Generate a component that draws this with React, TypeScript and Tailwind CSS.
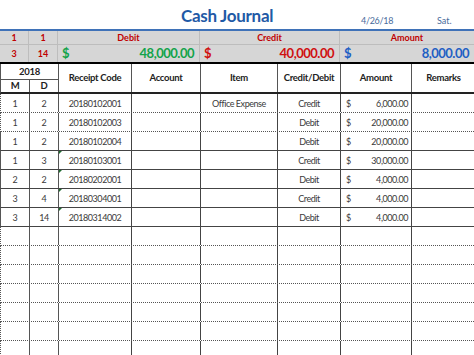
import React from "react";

const COLS = [29, 29, 73, 69, 77, 63, 71, 63];

type Row = {
  m?: string;
  d?: string;
  code?: string;
  item?: string;
  cd?: string;
  amt?: string;
  mark?: boolean;
  solid?: boolean;
};

const rows: Row[] = [
  { m: "1", d: "2", code: "20180102001", item: "Office Expense", cd: "Credit", amt: "6,000.00" },
  { m: "1", d: "2", code: "20180102003", cd: "Debit", amt: "20,000.00" },
  { m: "1", d: "2", code: "20180102004", cd: "Debit", amt: "20,000.00", solid: true },
  { m: "1", d: "3", code: "20180103001", cd: "Credit", amt: "30,000.00", mark: true, solid: true },
  { m: "2", d: "2", code: "20180202001", cd: "Debit", amt: "4,000.00", mark: true, solid: true },
  { m: "3", d: "4", code: "20180304001", cd: "Credit", amt: "4,000.00", mark: true, solid: true },
  { m: "3", d: "14", code: "20180314002", cd: "Debit", amt: "4,000.00", mark: true, solid: true },
  {}, {}, {}, {}, {}, {}, {},
];

export default function App() {
  return (
    <div
      className="w-[474px] h-[355px] overflow-hidden bg-white"
      style={{ fontFamily: "Lato, 'Noto Sans', sans-serif" }}
    >
      {/* Title bar */}
      <div className="flex h-[29px] items-end">
        <div className="w-[181px]" />
        <div className="w-[180px] pb-[5px] text-[17px] font-bold leading-none tracking-[-0.3px] text-[#1f5aa6]">
          Cash Journal
        </div>
        <div className="w-[76px] pb-[4px] text-[9px] leading-none tracking-[-0.3px] text-[#4a6c9c]">4/26/18</div>
        <div className="pb-[4px] text-[9px] leading-none text-[#4a6c9c]">Sat.</div>
      </div>
      <div className="h-[2px] bg-[#3f72b8]" />

      {/* Summary band */}
      <div className="bg-[#d6d6d6] border-b-2 border-black">
        <div className="flex h-[14px] border-b border-[#bdbdbd] text-[9px] font-bold text-[#c00000] leading-none">
          <div className="w-[29px] border-r border-[#bdbdbd] flex items-center justify-center">1</div>
          <div className="w-[29px] border-r border-[#bdbdbd] flex items-center justify-center">1</div>
          <div className="w-[142px] border-r border-[#bdbdbd] flex items-center justify-center">Debit</div>
          <div className="w-[140px] border-r border-[#bdbdbd] flex items-center justify-center">Credit</div>
          <div className="flex-1 flex items-center justify-center">Amount</div>
        </div>
        <div className="flex h-[17px] font-bold leading-none">
          <div className="w-[29px] border-r border-[#bdbdbd] flex items-center justify-center text-[9px] text-[#c00000]">3</div>
          <div className="w-[29px] border-r border-[#bdbdbd] flex items-center justify-center text-[9px] text-[#c00000]">14</div>
          <div className="w-[142px] border-r border-[#bdbdbd] flex items-center justify-between pl-[4px] pr-[5px] text-[13px] tracking-[-0.5px] text-[#13a34a]">
            <span>$</span>
            <span>48,000.00</span>
          </div>
          <div className="w-[140px] border-r border-[#bdbdbd] flex items-center justify-between pl-[4px] pr-[5px] text-[13px] tracking-[-0.5px] text-[#d01010]">
            <span>$</span>
            <span>40,000.00</span>
          </div>
          <div className="flex-1 flex items-center justify-between pl-[4px] pr-[5px] text-[13px] tracking-[-0.5px] text-[#1f5fc4]">
            <span>$</span>
            <span>8,000.00</span>
          </div>
        </div>
      </div>

      {/* Table header */}
      <div
        className="grid border-l border-[#555] border-b-2 border-b-[#222] text-[9.5px] font-bold tracking-[-0.3px] text-[#222] leading-none"
        style={{ gridTemplateColumns: COLS.map((c) => c + "px").join(" "), gridTemplateRows: "16px 12px" }}
      >
        <div className="col-span-2 border-r border-b border-[#555] flex items-center justify-center">2018</div>
        <div className="row-span-2 border-r border-[#555] flex items-center justify-center">Receipt Code</div>
        <div className="row-span-2 border-r border-[#555] flex items-center justify-center">Account</div>
        <div className="row-span-2 border-r border-[#555] flex items-center justify-center">Item</div>
        <div className="row-span-2 border-r border-[#555] flex items-center justify-center">Credit/Debit</div>
        <div className="row-span-2 border-r border-[#555] flex items-center justify-center">Amount</div>
        <div className="row-span-2 flex items-center justify-center">Remarks</div>
        <div className="border-r border-[#555] flex items-center justify-center">M</div>
        <div className="border-r border-[#555] flex items-center justify-center">D</div>
      </div>

      {/* Body rows */}
      {rows.map((r, i) => (
        <div
          key={i}
          className={`flex h-[19px] border-l border-[#555] border-b text-[9px] tracking-[-0.45px] text-[#3a3a3a] leading-none ${
            r.solid ? "border-b-[#444] border-solid" : "border-b-[#555] border-dotted"
          }`}
        >
          <div className="w-[29px] border-r border-solid border-r-[#555] flex items-center justify-center">{r.m}</div>
          <div className="w-[29px] border-r border-solid border-r-[#555] flex items-center justify-center">{r.d}</div>
          <div className="relative w-[73px] border-r border-solid border-r-[#444] flex items-center justify-center">
            {r.mark && (
              <div className="absolute left-0 top-0 h-0 w-0 border-t-[3px] border-r-[3px] border-t-[#1d6b2e] border-r-transparent" />
            )}
            {r.code}
          </div>
          <div className="w-[69px] border-r border-solid border-r-[#444]" />
          <div className="w-[77px] border-r border-solid border-r-[#444] flex items-center justify-center">{r.item}</div>
          <div className="w-[63px] border-r border-solid border-r-[#444] flex items-center justify-center">{r.cd}</div>
          <div className="w-[71px] border-r border-solid border-r-[#444] flex items-center justify-between pl-[5px] pr-[3px]">
            {r.amt && (
              <>
                <span>$</span>
                <span>{r.amt}</span>
              </>
            )}
          </div>
          <div className="flex-1" />
        </div>
      ))}
    </div>
  );
}
